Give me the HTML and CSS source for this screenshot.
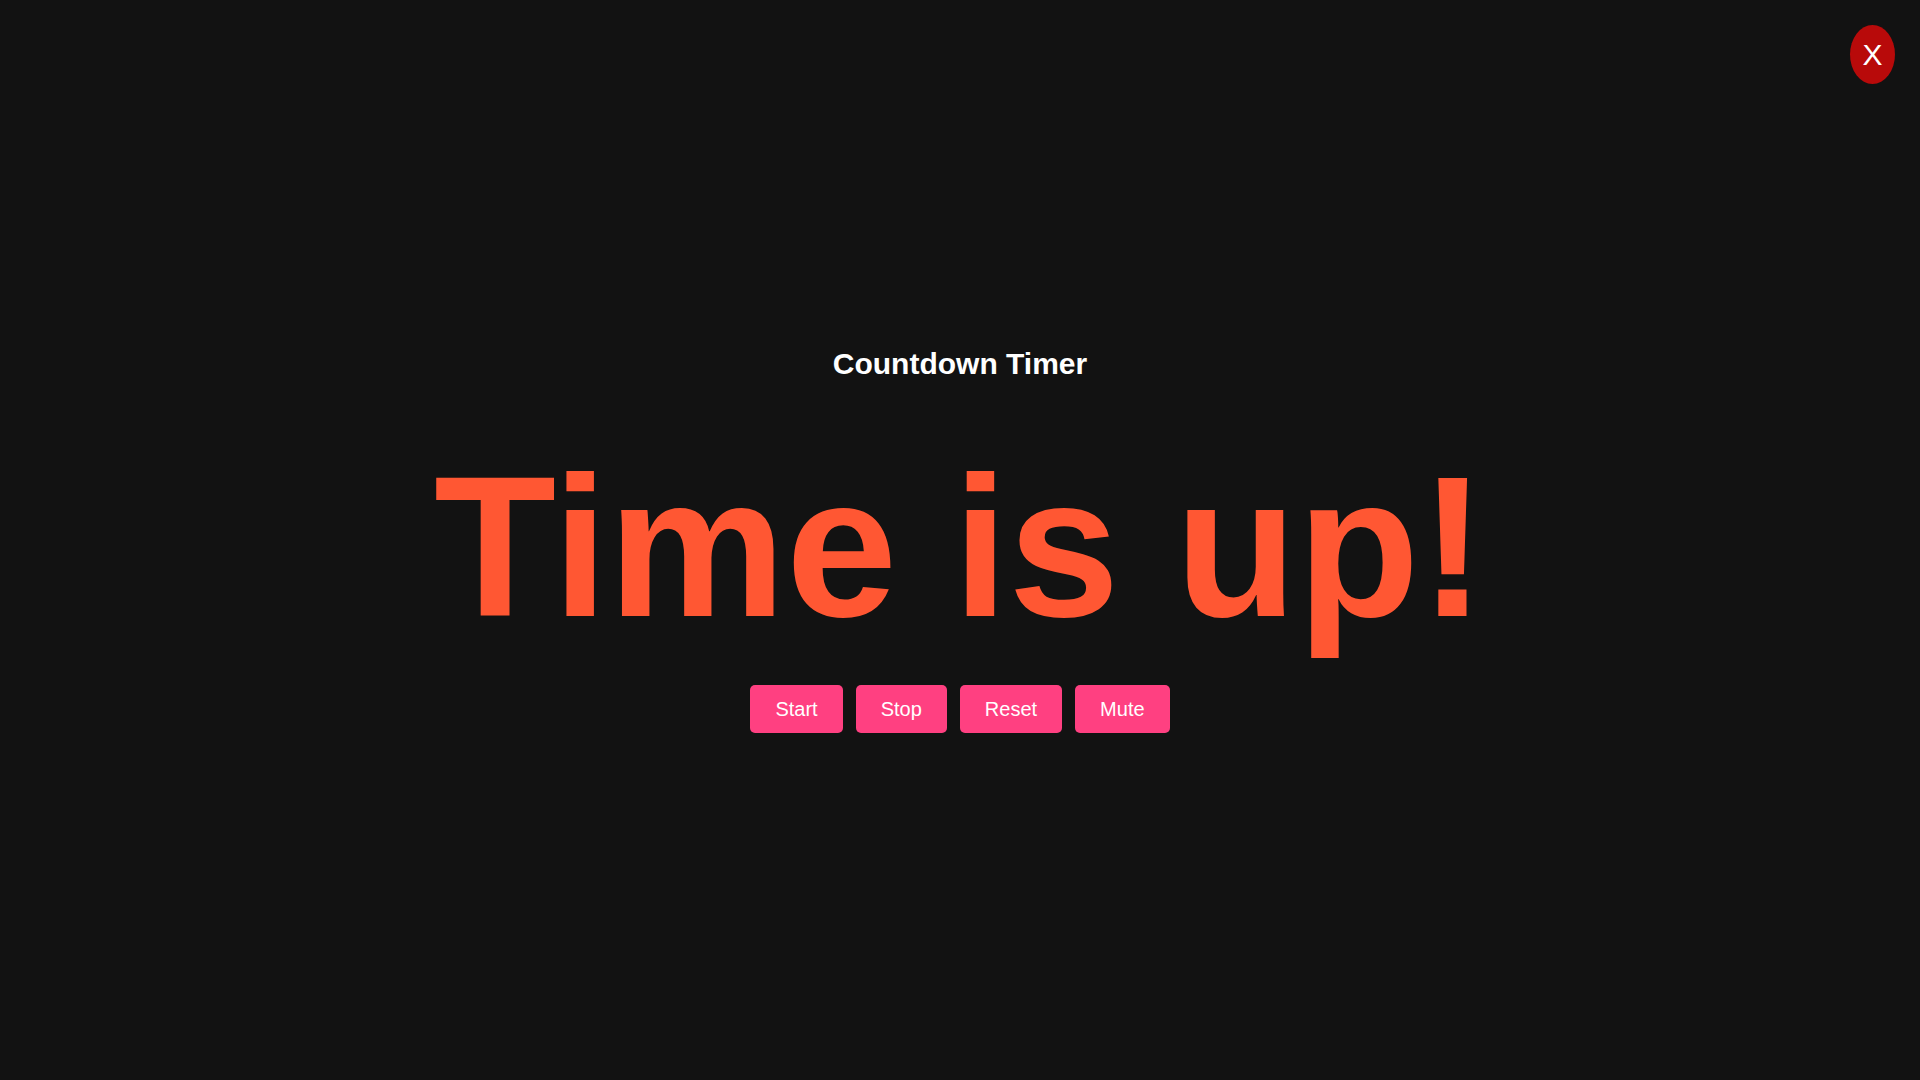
FILE: index.html
```html
<!DOCTYPE html>
<html lang="en">
<head>
<meta charset="utf-8">
<title>Countdown Timer</title>
<link rel="stylesheet" href="styles.css">
</head>
<body>
<button class="close-btn">X</button>
<main class="timer">
  <h2 class="timer-title">Countdown Timer</h2>
  <div class="timer-display">Time is up!</div>
  <div class="controls">
    <button class="ctrl-btn">Start</button>
    <button class="ctrl-btn">Stop</button>
    <button class="ctrl-btn">Reset</button>
    <button class="ctrl-btn">Mute</button>
  </div>
</main>
</body>
</html>
```
FILE: styles.css
```css
html, body {
  margin: 0;
  padding: 0;
}
body {
  background: #121212;
  color: #ffffff;
  font-family: "Liberation Sans", Arial, sans-serif;
  min-height: 100vh;
  display: flex;
  align-items: center;
  justify-content: center;
}
.close-btn {
  position: absolute;
  top: 25px;
  right: 25px;
  width: 45px;
  height: 59px;
  border: none;
  border-radius: 50%;
  background: #b80a0a;
  color: #ffffff;
  font-family: "Liberation Sans", Arial, sans-serif;
  font-size: 30px;
  padding: 0;
  line-height: 1;
  cursor: pointer;
}
.timer {
  display: flex;
  flex-direction: column;
  align-items: center;
}
.timer-title {
  margin: 0 0 51px 0;
  font-size: 30px;
  font-weight: bold;
  color: #ffffff;
}
.timer-display {
  font-size: 200px;
  font-weight: bold;
  color: #ff5733;
  margin-bottom: 23px;
}
.controls {
  display: flex;
  gap: 13px;
}
.ctrl-btn {
  height: 48px;
  padding: 0 25px;
  border: none;
  border-radius: 5px;
  background: #ff4081;
  color: #ffffff;
  font-family: "Liberation Sans", Arial, sans-serif;
  font-size: 20px;
  cursor: pointer;
}
```
